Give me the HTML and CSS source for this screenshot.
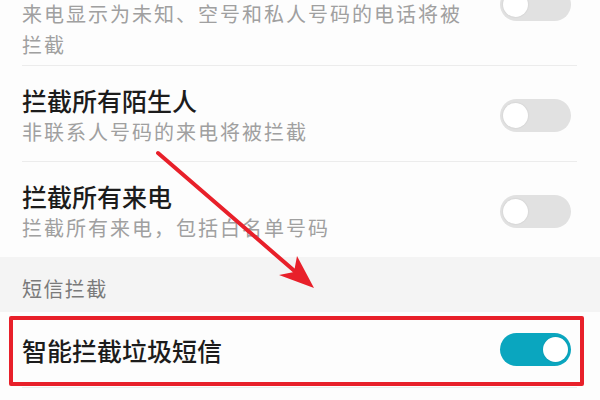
FILE: index.html
```html
<!DOCTYPE html>
<html lang="zh-CN">
<head>
    <meta charset="UTF-8">
    <meta name="viewport" content="width=device-width, initial-scale=1.0">
    <title>骚扰拦截设置</title>
    <link rel="stylesheet" href="styles.css">
</head>
<body>
    <div class="screen">
        <div class="list">
            <div class="row multi">
                <div class="text">
                    <div class="sub">来电显示为未知、空号和私人号码的电话将被拦截</div>
                </div>
                <span class="switch"></span>
            </div>
            <div class="row">
                <div class="text">
                    <div class="title">拦截所有陌生人</div>
                    <div class="sub">非联系人号码的来电将被拦截</div>
                </div>
                <span class="switch"></span>
            </div>
            <div class="row last">
                <div class="text">
                    <div class="title">拦截所有来电</div>
                    <div class="sub">拦截所有来电，包括白名单号码</div>
                </div>
                <span class="switch"></span>
            </div>
        </div>

        <div class="section">短信拦截</div>

        <div class="list">
            <div class="row single">
                <div class="text">
                    <div class="title">智能拦截垃圾短信</div>
                </div>
                <span class="switch on"></span>
            </div>
        </div>

        <!-- annotation: red box + arrow drawn over the screenshot -->
        <div class="mark-box"></div>
        <svg class="mark-arrow" width="600" height="400" viewBox="0 0 600 400">
            <line x1="158" y1="153" x2="298" y2="274" stroke="#e8202a" stroke-width="4" stroke-linecap="round"/>
            <polygon points="314,288 297,256 294,272 279,275" fill="#e8202a"/>
        </svg>
    </div>
</body>
</html>
```

FILE: styles.css
```css
* {
    box-sizing: border-box;
    margin: 0;
    padding: 0;
}

body {
    font-family: "Noto Sans CJK SC", "Noto Sans", sans-serif;
    background: #fdfdfd;
}

.screen {
    position: relative;
    width: 600px;
    height: 400px;
    overflow: hidden;
    background: #fdfdfd;
}

.list:first-child {
    margin-top: -2px;
}

.row {
    display: flex;
    align-items: center;
    margin: 0 23px 0 22px;
    padding: 18px 0 14px;
    border-bottom: 1px solid #ececec;
}

.row.multi {
    padding: 0 0 5px;
}

.row.multi .switch {
    align-self: flex-start;
    margin-top: -10px;
}

.row.last {
    border-bottom: none;
}

.row.single {
    padding: 21px 0 21px;
}

.text {
    flex: 1;
    max-width: 452px;
}

.title {
    font-size: 25px;
    font-weight: 500;
    line-height: 32px;
    color: #1c1c1c;
}

.sub {
    font-size: 20px;
    line-height: 31px;
    letter-spacing: 2px;
    color: #a0a0a0;
}

.switch {
    position: relative;
    flex: none;
    width: 71px;
    height: 33px;
    margin-left: auto;
    margin-right: 6px;
    border-radius: 17px;
    background: #e1e1e1;
}

.switch::after {
    content: "";
    position: absolute;
    top: 4px;
    left: 3px;
    width: 25px;
    height: 25px;
    border-radius: 50%;
    background: #fff;
    box-shadow: 0 0 2px rgba(0, 0, 0, 0.12);
}

.switch.on {
    background: #0aa6bf;
}

.switch.on::after {
    left: auto;
    right: 3px;
}

.section {
    padding: 18px 22px 9px;
    font-size: 20px;
    line-height: 28px;
    letter-spacing: 1.4px;
    color: #7a7a7a;
    background: #f4f4f4;
}

.mark-box {
    position: absolute;
    left: 9px;
    top: 316px;
    width: 575px;
    height: 70px;
    border: 4px solid #e8202a;
    border-radius: 2px;
}

.mark-arrow {
    position: absolute;
    left: 0;
    top: 0;
}
```
